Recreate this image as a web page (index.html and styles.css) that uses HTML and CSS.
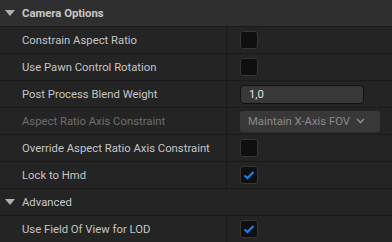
FILE: index.html
```html
<!DOCTYPE html>
<html>
<head>
<meta charset="utf-8">
<link rel="stylesheet" href="styles.css">
</head>
<body>
<div class="panel">
  <div class="cat top">
    <span class="tri"></span><span class="cat-title">Camera Options</span>
  </div>
  <div class="row">
    <div class="label">Constrain Aspect Ratio</div>
    <div class="value"><span class="cb"></span></div>
  </div>
  <div class="row">
    <div class="label">Use Pawn Control Rotation</div>
    <div class="value"><span class="cb"></span></div>
  </div>
  <div class="row">
    <div class="label">Post Process Blend Weight</div>
    <div class="value"><span class="num">1,0</span></div>
  </div>
  <div class="row">
    <div class="label dis">Aspect Ratio Axis Constraint</div>
    <div class="value"><span class="combo">Maintain X-Axis FOV<svg class="chev" width="9" height="6" viewBox="0 0 9 6"><path d="M1 1 L4.5 4.5 L8 1" fill="none" stroke="#8a8a8a" stroke-width="1.6"/></svg></span></div>
  </div>
  <div class="row">
    <div class="label">Override Aspect Ratio Axis Constraint</div>
    <div class="value"><span class="cb"></span></div>
  </div>
  <div class="row">
    <div class="label">Lock to Hmd</div>
    <div class="value"><span class="cb"><svg width="12" height="10" viewBox="0 0 12 10"><path d="M1.5 5.5 L4.5 8 L10.5 2" fill="none" stroke="#1a80ef" stroke-width="2.2"/></svg></span></div>
  </div>
  <div class="cat sub">
    <span class="tri"></span><span class="cat-title light">Advanced</span>
  </div>
  <div class="row">
    <div class="label">Use Field Of View for LOD</div>
    <div class="value"><span class="cb"><svg width="12" height="10" viewBox="0 0 12 10"><path d="M1.5 5.5 L4.5 8 L10.5 2" fill="none" stroke="#1a80ef" stroke-width="2.2"/></svg></span></div>
  </div>
</div>
</body>
</html>
```
FILE: styles.css
```css
html, body {
  margin: 0;
  padding: 0;
  background: #242424;
}
.panel {
  width: 392px;
  font-family: Roboto, "Noto Sans", sans-serif;
  font-size: 11.3px;
  color: #c4c4c4;
}
.cat {
  height: 26px;
  display: flex;
  align-items: center;
  border-bottom: 1px solid #1a1a1a;
}
.cat.top {
  background: #2f2f2f;
}
.cat.sub {
  background: #242424;
}
.tri {
  width: 0;
  height: 0;
  margin-left: 5px;
  margin-right: 7px;
  border-left: 5px solid transparent;
  border-right: 5px solid transparent;
  border-top: 6px solid #b0b0b0;
}
.cat-title {
  font-weight: bold;
  color: #c8c8c8;
}
.cat-title.light {
  font-weight: normal;
}
.row {
  height: 26px;
  display: flex;
  border-bottom: 1px solid #1a1a1a;
}
.label {
  width: 227px;
  padding-left: 22px;
  box-sizing: border-box;
  display: flex;
  align-items: center;
  border-right: 1px solid #1a1a1a;
  white-space: nowrap;
  overflow: hidden;
}
.label.dis {
  color: #6e6e6e;
}
.value {
  flex: 1;
  display: flex;
  align-items: center;
  padding-left: 13px;
}
.cb {
  width: 16px;
  height: 16px;
  background: #0f0f0f;
  border: 1px solid #363636;
  border-radius: 3px;
  display: flex;
  align-items: center;
  justify-content: center;
}
.num {
  height: 17px;
  background: #383838;
  border: 1px solid #121212;
  border-radius: 4px;
  display: flex;
  align-items: center;
  padding-left: 8px;
  width: 114px;
  color: #e0e0e0;
}
.combo {
  height: 21px;
  width: 124px;
  padding-left: 8px;
  padding-right: 8px;
  background: #383838;
  border-radius: 3px;
  display: flex;
  align-items: center;
  color: #8a8a8a;
}
.chev {
  display: block;
  margin-left: 6px;
}
```
